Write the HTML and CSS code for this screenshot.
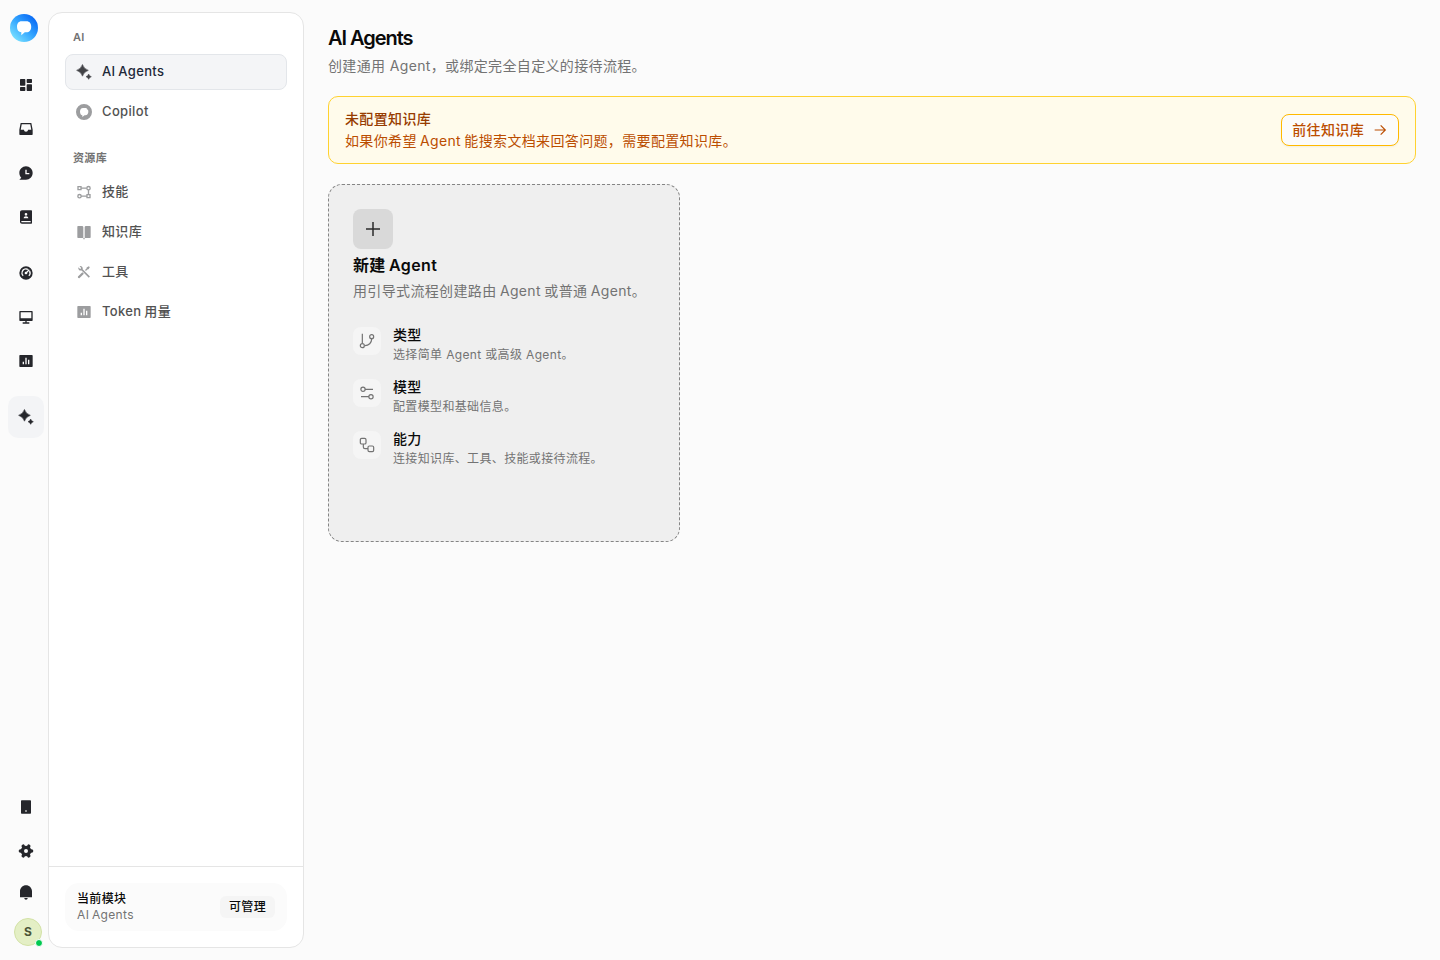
FILE: index.html
```
<!DOCTYPE html>
<html lang="zh-CN">
<head>
  <meta charset="UTF-8" />
  <title>AI Agents</title>
  <meta name="viewport" content="width=device-width, initial-scale=1.0">
  <link rel="stylesheet" href="styles.css">
</head>
<body>

  <!-- Shared icons -->
  <svg class="sprite" aria-hidden="true">
    <symbol id="i-sparkle" viewBox="0 0 24 24">
      <path d="M9.700 0.700Q11.900 7.300 18.500 9.500Q11.900 11.700 9.700 18.300Q7.500 11.700 0.900 9.500Q7.500 7.300 9.700 0.700Z" stroke="currentColor" stroke-width="0.8" />
      <path d="M19 15Q19.900 18.100 23 19Q19.900 19.900 19 23Q18.100 19.900 15 19Q18.100 18.100 19 15Z" stroke="currentColor" stroke-width="0.8" />
    </symbol>
    <symbol id="i-chart" viewBox="0 0 24 24">
      <path fill-rule="evenodd" d="M3 3H21C21.600 3 22 3.400 22 4V20C22 20.600 21.600 21 21 21H3C2.400 21 2 20.600 2 20V4C2 3.400 2.400 3 3 3ZM7 13V17H9V13ZM11 7V17H13V7ZM15 10V17H17V10Z" />
    </symbol>
  </svg>

  <div class="app">
    <nav class="rail">
      <a class="logo" href="#">
        <svg viewBox="0 0 28 28">
          <defs>
            <linearGradient id="logoFill" x1="0.1" y1="0.9" x2="0.85" y2="0.1">
              <stop offset="0" stop-color="#7de3ff" />
              <stop offset="0.5" stop-color="#36a8ff" />
              <stop offset="1" stop-color="#0869f5" />
            </linearGradient>
          </defs>
          <circle cx="14" cy="14" r="14" fill="url(#logoFill)" />
          <path fill="#fff" d="M11.500 7.300H16.500C19.400 7.300 21.200 9.500 21.200 12.800C21.200 16.300 19.400 18.300 16.500 18.300H14.800L11.300 21.300V18.300C8.500 18.100 7 16.200 7 12.800C7 9.400 8.700 7.300 11.500 7.300Z" />
        </svg>
      </a>

      <div class="rail-group">
        <a class="rail-item" href="#"><svg viewBox="0 0 24 24"><path d="M3 12C3 12.600 3.400 13 4 13H10C10.600 13 11 12.600 11 12V4C11 3.400 10.600 3 10 3H4C3.400 3 3 3.400 3 4V12ZM3 20C3 20.600 3.400 21 4 21H10C10.600 21 11 20.600 11 20V16C11 15.400 10.600 15 10 15H4C3.400 15 3 15.400 3 16V20ZM13 20C13 20.600 13.400 21 14 21H20C20.600 21 21 20.600 21 20V12C21 11.400 20.600 11 20 11H14C13.400 11 13 11.400 13 12V20ZM14 3C13.400 3 13 3.400 13 4V8C13 8.600 13.400 9 14 9H20C20.600 9 21 8.600 21 8V4C21 3.400 20.600 3 20 3H14Z" /></svg></a>
        <a class="rail-item" href="#"><svg viewBox="0 0 24 24"><path fill-rule="evenodd" d="M4 3H20L22 13V20C22 20.600 21.600 21 21 21H3C2.400 21 2 20.600 2 20V13L4 3ZM5.600 5L4.100 13H9C9 14.700 10.300 16 12 16S15 14.700 15 13H19.900L18.400 5H5.600Z" /></svg></a>
        <a class="rail-item" href="#"><svg viewBox="0 0 24 24"><path fill-rule="evenodd" d="M12 2C17.500 2 22 6.500 22 12S17.500 22 12 22H2L4.900 19.100C3.100 17.300 2 14.800 2 12C2 6.500 6.500 2 12 2ZM11 7V14H17V12H13V7H11Z" /></svg></a>
        <a class="rail-item" href="#"><svg viewBox="0 0 24 24"><path fill-rule="evenodd" d="M6 2H20C20.600 2 21 2.400 21 3V21C21 21.600 20.600 22 20 22H6C4.300 22 3 20.700 3 19V5C3 3.300 4.300 2 6 2ZM5.500 18C4.700 18 4.700 20 5.500 20H19V18H5.500ZM12 6A2 2 0 0 0 12 10A2 2 0 0 0 12 6ZM8.500 14H15.500C15.500 12 14 11 12 11S8.500 12 8.500 14Z" /></svg></a>
      </div>
      <div class="rail-group">
        <a class="rail-item" href="#"><svg viewBox="0 0 24 24"><path fill-rule="evenodd" d="M12 2A10 10 0 1 1 12 22A10 10 0 0 1 12 2ZM12 5A7 7 0 0 0 7.050 16.950L8.460 15.540A5 5 0 0 1 14.200 7.500L15.700 6A7 7 0 0 0 12 5ZM18 8.300L16.500 9.800A5 5 0 0 1 15.540 15.540L16.950 16.950A7 7 0 0 0 18 8.300ZM16.200 6.400L12.500 10.100A2 2 0 1 0 13.900 11.500L17.600 7.800Z" /></svg></a>
        <a class="rail-item" href="#"><svg viewBox="0 0 24 24"><path fill-rule="evenodd" d="M3 3H21C21.600 3 22 3.400 22 4V17C22 17.600 21.600 18 21 18H13V20H17V22H7V20H11V18H3C2.400 18 2 17.600 2 17V4C2 3.400 2.400 3 3 3ZM4 5V14H20V5H4Z" /></svg></a>
        <a class="rail-item" href="#"><svg><use href="#i-chart" /></svg></a>
      </div>
      <div class="rail-group">
        <a class="rail-item active" href="#"><svg><use href="#i-sparkle" /></svg></a>
      </div>

      <div class="rail-bottom">
        <a class="rail-item" href="#"><svg viewBox="0 0 24 24"><path fill-rule="evenodd" d="M5.500 2H18.500C19 2 19.500 2.400 19.500 3V21C19.500 21.600 19 22 18.500 22H5.500C5 22 4.500 21.600 4.500 21V3C4.500 2.400 5 2 5.500 2ZM11 17V19H13V17Z" /></svg></a>
        <a class="rail-item" href="#"><svg viewBox="0 0 24 24" class="gear"><circle cx="12" cy="12" r="5.500" /><path d="M19 12H20.500M15.500 18.060L16.250 19.360M8.500 18.060L7.750 19.360M5 12H3.500M8.500 5.940L7.750 4.640M15.500 5.940L16.250 4.640" /></svg></a>
        <a class="rail-item bell" href="#"><svg viewBox="0 0 24 24"><path d="M12 2C16.970 2 21 6 21 11V20H3V11C3 6 7 2 12 2ZM9.500 21H14.500C14.500 22.400 13.400 23.500 12 23.500S9.500 22.400 9.500 21Z" /></svg></a>
        <div class="avatar">S<span class="status"></span></div>
      </div>
    </nav>

    <aside class="sidebar">
      <div class="menu">
        <h2 class="menu-label">AI</h2>
        <a class="menu-item active" href="#"><svg><use href="#i-sparkle" /></svg><span>AI Agents</span></a>
        <a class="menu-item" href="#"><svg viewBox="0 0 24 24"><path fill-rule="evenodd" d="M12 0A12 12 0 1 1 12 24A12 12 0 0 1 12 0ZM10.500 6C7.500 6 6 8.500 6 11.500C6 14.500 7.500 16.500 9.500 17V19.500L12.800 17H14C16.800 16.500 18.500 14.500 18.500 11.500C18.500 10.300 18.200 9.200 17.800 8.300C17 8.800 16 8 16.300 6.900C15.500 6.200 14.700 6 13.500 6H10.500Z" /></svg><span>Copilot</span></a>

        <h2 class="menu-label">资源库</h2>
        <a class="menu-item" href="#"><svg viewBox="0 0 24 24" class="line"><path d="M3 4H7.500V8.500H3ZM16.500 16H21V20.500H16.500ZM7.500 6.250H16M7.500 18.250H16.500M18.750 8.500V16" /><circle cx="18.750" cy="6.250" r="2.500" /><circle cx="5.250" cy="18.250" r="2.500" /></svg><span>技能</span></a>
        <a class="menu-item" href="#"><svg viewBox="0 0 24 24"><path d="M3 3H9C10.100 3 11 4 11 5V21H3C2.400 21 2 20.600 2 20V4C2 3.400 2.400 3 3 3ZM15 3H21C21.600 3 22 3.400 22 4V20C22 20.600 21.600 21 21 21H13V5C13 4 13.900 3 15 3ZM11 21H13V23H11Z" /></svg><span>知识库</span></a>
        <a class="menu-item" href="#"><svg viewBox="0 0 24 24"><path d="M5.300 3.300A3.700 3.700 0 0 1 10 8L20.900 18.900L19.200 20.600L8.300 9.700A3.700 3.700 0 0 1 3.600 5L5.800 7.200A1.500 1.500 0 0 0 7.600 5.500ZM16 5.200L19.300 3.300L20.700 4.700L18.800 8L17 8.400L14.900 10.500L13.500 9.100L15.600 7ZM9.500 12.200L11.900 14.500L5.400 21C4.200 22 2 20 3 18.600Z" /></svg><span>工具</span></a>
        <a class="menu-item" href="#"><svg><use href="#i-chart" /></svg><span>Token 用量</span></a>
      </div>

      <div class="sidebar-footer">
        <div class="module">
          <div>
            <div class="module-title">当前模块</div>
            <div class="module-name">AI Agents</div>
          </div>
          <span class="badge">可管理</span>
        </div>
      </div>
    </aside>

    <main class="content">
      <h1>AI Agents</h1>
      <p class="subtitle">创建通用 Agent，或绑定完全自定义的接待流程。</p>

      <section class="alert">
        <div>
          <div class="alert-title">未配置知识库</div>
          <p class="alert-text">如果你希望 Agent 能搜索文档来回答问题，需要配置知识库。</p>
        </div>
        <button class="alert-button">前往知识库
          <svg viewBox="0 0 24 24"><path d="M4 12H20M13 5L20 12L13 19" /></svg>
        </button>
      </section>

      <section class="create-card">
        <div class="plus"><svg viewBox="0 0 24 24"><path d="M5 12H19M12 5V19" /></svg></div>
        <h3>新建 Agent</h3>
        <p class="create-text">用引导式流程创建路由 Agent 或普通 Agent。</p>
        <ul class="features">
          <li>
            <span class="feature-icon"><svg viewBox="0 0 24 24"><path d="M5 1V15M19 9A10 10 0 0 1 9 19" /><circle cx="19" cy="5.500" r="3" /><circle cx="5" cy="19" r="3" /></svg></span>
            <div><h4>类型</h4><p>选择简单 Agent 或高级 Agent。</p></div>
          </li>
          <li>
            <span class="feature-icon"><svg viewBox="0 0 24 24"><path d="M21 6.500H9M15 17.500H3" /><circle cx="18" cy="17.500" r="3.200" /><circle cx="6" cy="6.500" r="3.200" /></svg></span>
            <div><h4>模型</h4><p>配置模型和基础信息。</p></div>
          </li>
          <li>
            <span class="feature-icon"><svg viewBox="0 0 24 24"><rect x="2" y="2" width="8.500" height="8.500" rx="2" /><rect x="13.500" y="13.500" width="8.500" height="8.500" rx="2" /><path d="M6.500 10.500V15A2.500 2.500 0 0 0 9 17.500H13.500" /></svg></span>
            <div><h4>能力</h4><p>连接知识库、工具、技能或接待流程。</p></div>
          </li>
        </ul>
      </section>
    </main>
  </div>

</body>
</html>
```
FILE: styles.css
```
* {
  box-sizing: border-box;
}

body, h1, h2, h3, h4, p, ul {
  margin: 0;
  padding: 0;
}

body {
  background: #fbfbfb;
  color: #0a0a0a;
  font-family: Inter, "Noto Sans CJK SC", sans-serif;
  font-size: 14px;
  line-height: 20px;
  letter-spacing: 0.025em;
}

a {
  color: inherit;
  text-decoration: none;
}

svg {
  display: block;
  flex-shrink: 0;
  fill: currentColor;
}

.sprite {
  display: none;
}

.app {
  display: flex;
  height: 100vh;
}

/* Icon rail */
.rail {
  width: 48px;
  display: flex;
  flex-direction: column;
  padding: 14px 0 14px 8px;
  color: #25262b;
}

.logo {
  width: 28px;
  margin: 0 0 25px 2px;
}

.rail-group {
  display: flex;
  flex-direction: column;
  gap: 8px;
  margin-bottom: 20px;
}

.rail-item {
  width: 36px;
  height: 36px;
  display: flex;
  align-items: center;
  justify-content: center;
  border-radius: 10px;
}

.rail-item svg {
  width: 16px;
  height: 16px;
}

.rail-item.active {
  height: 42px;
  margin-top: -3px;
  background: #f3f4f6;
}

.rail-item .gear {
  fill: none;
  stroke: currentColor;
  stroke-width: 5;
  stroke-linecap: round;
}

.rail-bottom {
  display: flex;
  flex-direction: column;
  gap: 8px;
  margin-top: auto;
}

.rail-item.bell {
  height: 30px;
}

.avatar {
  position: relative;
  width: 28px;
  height: 28px;
  margin: 3px 0 0 6px;
  display: flex;
  align-items: center;
  justify-content: center;
  border: 1px solid #d3e2a6;
  border-radius: 50%;
  background: #e4efc5;
  color: #4c5638;
  font-size: 12px;
  font-weight: 700;
}

.status {
  position: absolute;
  right: -2px;
  bottom: -2px;
  width: 8px;
  height: 8px;
  border: 1px solid #fff;
  border-radius: 50%;
  background: #00c950;
}

/* Sidebar */
.sidebar {
  width: 256px;
  margin: 12px 0;
  display: flex;
  flex-direction: column;
  border: 1px solid #e5e5e5;
  border-radius: 14px;
  background: #fff;
}

.menu {
  flex: 1;
  display: flex;
  flex-direction: column;
  gap: 4px;
  padding: 16px;
}

.menu-label {
  height: 21px;
  padding: 0 8px;
  color: #737373;
  font-size: 11px;
  font-weight: 600;
  line-height: 16px;
}

.menu-item + .menu-label {
  height: 20px;
  margin-top: 16px;
}

.menu-item {
  height: 36px;
  display: flex;
  align-items: center;
  gap: 10px;
  padding: 0 10px;
  border: 1px solid transparent;
  border-radius: 8px;
  color: #525252;
  font-size: 13px;
  font-weight: 500;
  word-spacing: -1px;
}

.menu-item span {
  padding-bottom: 2px;
}

.menu-item svg {
  width: 16px;
  height: 16px;
  color: #9c9d9f;
}

.menu-item .line {
  fill: none;
  stroke: currentColor;
  stroke-width: 2;
}

.menu-item.active {
  border-color: #e3e6ea;
  background: #f4f5f7;
  color: #1e2939;
}

.menu-item.active svg {
  color: #424347;
}

.sidebar-footer {
  padding: 16px;
  border-top: 1px solid #e5e5e5;
}

.module {
  height: 48px;
  display: flex;
  align-items: center;
  justify-content: space-between;
  padding: 0 12px;
  border-radius: 14px;
  background: #fbfbfb;
  font-size: 12px;
  line-height: 16px;
}

.module-title {
  font-weight: 500;
}

.module-name {
  color: #737373;
  word-spacing: -1px;
}

.badge {
  padding: 3px 9px;
  border-radius: 6px;
  background: #f5f5f5;
  font-weight: 500;
}

/* Main content */
.content {
  flex: 1;
  padding: 24px;
}

h1 {
  font-size: 20px;
  font-weight: 600;
  line-height: 28px;
  letter-spacing: -0.052em;
}

.subtitle {
  margin-top: 4px;
  color: #737373;
}

.alert {
  height: 68px;
  display: flex;
  align-items: center;
  justify-content: space-between;
  margin-top: 20px;
  padding: 0 16px;
  border: 1px solid #ffd230;
  border-radius: 10px;
  background: #fffbeb;
}

.alert-title {
  margin-bottom: 2px;
  color: #973c00;
  font-weight: 500;
}

.alert-text {
  color: #bb4d00;
  word-spacing: -1px;
}

.alert-button {
  height: 32px;
  display: flex;
  align-items: center;
  gap: 8px;
  padding: 0 10px;
  border: 1px solid #ffb900;
  border-radius: 8px;
  background: #fbfbfb;
  box-shadow: 0 1px 2px rgba(0, 0, 0, 0.05);
  color: #bb4d00;
  font: inherit;
  font-weight: 500;
  letter-spacing: 0.025em;
}

.alert-button svg {
  width: 16px;
  height: 16px;
  fill: none;
  stroke: currentColor;
  stroke-width: 1.75;
}

.create-card {
  width: 352px;
  height: 358px;
  margin-top: 20px;
  padding: 24px;
  border: 1px dashed #858585;
  border-radius: 14px;
  background: #efefef;
}

.plus {
  width: 40px;
  height: 40px;
  display: grid;
  place-items: center;
  border-radius: 8px;
  background: #d9d9d9;
  color: #2b2b2b;
}

.plus svg,
.feature-icon svg {
  width: 24px;
  height: 24px;
  fill: none;
  stroke: currentColor;
  stroke-width: 1.5;
}

h3 {
  margin-top: 4px;
  font-size: 16px;
  font-weight: 600;
  line-height: 24px;
  word-spacing: -1px;
}

.create-text {
  margin-top: 4px;
  color: #737373;
  word-spacing: -0.9px;
}

.features {
  display: flex;
  flex-direction: column;
  gap: 12px;
  margin-top: 24px;
  list-style: none;
}

.features li {
  display: flex;
  gap: 12px;
}

.feature-icon {
  width: 28px;
  height: 28px;
  margin-top: 2px;
  display: grid;
  place-items: center;
  border-radius: 8px;
  background: #f5f5f5;
  color: #737373;
}

.feature-icon svg {
  width: 16px;
  height: 16px;
  stroke-width: 1.8;
}

.features h4 {
  font-size: 14px;
  font-weight: 500;
}

.features p {
  color: #737373;
  font-size: 12px;
}
```
